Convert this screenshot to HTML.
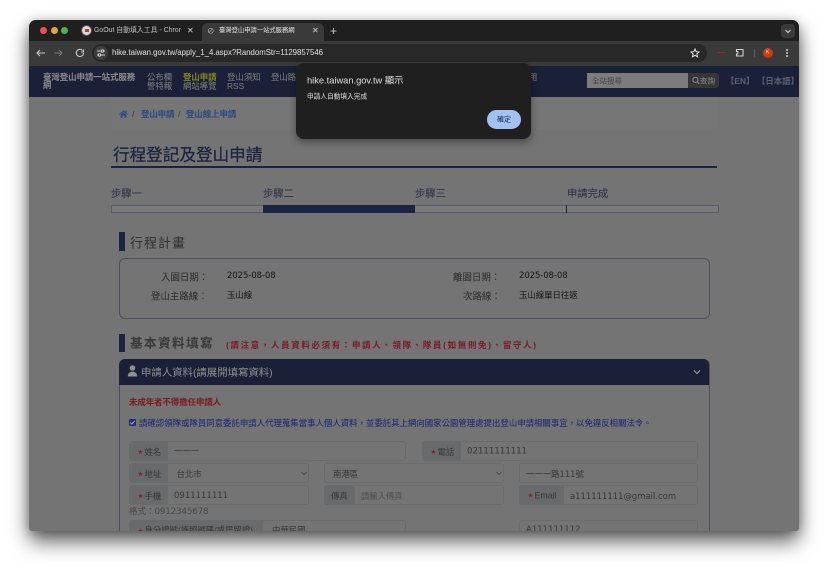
<!DOCTYPE html>
<html lang="zh-Hant">
<head>
<meta charset="utf-8">
<title>臺灣登山申請一站式服務網</title>
<style>
html,body{margin:0;padding:0;background:#fff;width:828px;height:569px;overflow:hidden}
body{font-family:"Liberation Sans","Noto Sans CJK TC",sans-serif;position:relative}
#win{position:absolute;left:29px;top:20px;width:770px;height:511px;border-radius:7px;box-shadow:0 11px 20px rgba(0,0,0,.58),0 2px 11px rgba(0,0,0,.28)}
#clip{position:absolute;left:0;top:0;width:770px;height:511px;border-radius:7px 7px 3px 3px;overflow:hidden;background:#747474}
#layer{position:absolute;left:-29px;top:-20px;width:828px;height:569px;filter:blur(.35px)}
#dlg{position:absolute;left:0;top:0;width:828px;height:569px;filter:blur(.3px)}
.t{position:absolute;white-space:nowrap;line-height:1;transform:translateY(-50%);-webkit-text-stroke:.06px currentColor}
.b{position:absolute;box-sizing:border-box}
.d{font-family:"DejaVu Sans","Noto Sans CJK TC",sans-serif}
.box{border:1px solid #696b6d;border-radius:3px;background:#747474}
.ad{background:#696a6b;border-right:1px solid #696b6d;border-radius:3px 0 0 3px}
.i{font-size:8.4px;color:#3a3a3a}
.s{color:#8c2028;display:inline-block;width:7px;font-size:6.5px;font-family:"DejaVu Sans",sans-serif;vertical-align:.2px}
.v{font-size:9px;color:#1a1a1a}
.l{font-size:9.45px;color:#303030}
</style>
</head>
<body>
<div id="win"><div id="clip"><div id="layer">

<!-- tab strip -->
<div class="b" style="left:29px;top:20px;width:770px;height:21px;background:#1f1f1f"></div>
<div class="b" style="left:40px;top:27px;width:7px;height:7px;border-radius:50%;background:#e5524c"></div>
<div class="b" style="left:50.5px;top:27px;width:7px;height:7px;border-radius:50%;background:#e0a82e"></div>
<div class="b" style="left:61px;top:27px;width:7px;height:7px;border-radius:50%;background:#4fb548"></div>
<div class="b" style="left:81px;top:25px;width:11px;height:11px;border-radius:50%;background:#d8d8d8;border:1px solid #555"></div>
<div class="b" style="left:84.5px;top:29px;width:4px;height:3px;background:#c0392b"></div>
<div class="t" style="left:94px;top:30.5px;width:87px;overflow:hidden;font-size:6.9px;line-height:12px;color:#b5b5b5">GoOut 自動填入工具 - Chrome</div>
<div class="t" style="left:187px;top:30.5px;font-size:8px;color:#d0d0d0">✕</div>
<div class="b" style="left:202px;top:23px;width:122px;height:18px;background:#3a3a3a;border-radius:6px 6px 0 0"></div>
<div class="t" style="left:207px;top:30.5px;font-size:7.5px;color:#bbb">⊘</div>
<div class="t" style="left:219px;top:30.5px;font-size:6.3px;color:#d8d8d8">臺灣登山申請一站式服務網</div>
<div class="t" style="left:312px;top:30.5px;font-size:8px;color:#d0d0d0">✕</div>
<div class="t" style="left:330px;top:30.5px;font-size:12px;color:#c8c8c8">+</div>
<div class="b" style="left:781px;top:24px;width:14px;height:14px;border-radius:4px;background:#3a3a3a"></div>
<svg class="b" style="left:784px;top:27px" width="8" height="8" viewBox="0 0 8 8"><path d="M1.5 3 L4 5.5 L6.5 3" fill="none" stroke="#ccc" stroke-width="1.2"/></svg>

<!-- toolbar -->
<div class="b" style="left:29px;top:41px;width:770px;height:25px;background:#3a3a3a"></div>
<div class="b" style="left:92px;top:44px;width:615px;height:18px;border-radius:9px;background:#282828"></div>
<div class="b" style="left:94px;top:46px;width:14px;height:14px;border-radius:50%;background:#3d3d3d"></div>
<svg class="b" style="left:35px;top:47px" width="60" height="12" viewBox="0 0 60 12" fill="none" stroke-width="1.1">
<path d="M10 6H2M5 3 2 6l3 3" stroke="#c8c8c8"/>
<path d="M19 6h8M24 3l3 3-3 3" stroke="#777"/>
<path d="M47.5 3.4A3.6 3.6 0 1 0 48.5 6M48.5 2.5v2.5H46" stroke="#c8c8c8"/>
</svg>
<svg class="b" style="left:96px;top:48px" width="10" height="10" viewBox="0 0 10 10" fill="none" stroke="#d0d0d0" stroke-width="1"><path d="M1 3h4M8 3h1M1 7h1M5 7h4"/><circle cx="6.5" cy="3" r="1.2"/><circle cx="3.5" cy="7" r="1.2"/></svg>
<div class="t" style="left:112px;top:53px;font-size:7.8px;color:#d8d8d8">hike.taiwan.gov.tw/apply_1_4.aspx?RandomStr=1129857546</div>
<svg class="b" style="left:690px;top:48px" width="10" height="10" viewBox="0 0 10 10"><path d="M5 1 6.2 3.7 9 4 6.9 5.9 7.5 8.8 5 7.3 2.5 8.8 3.1 5.9 1 4 3.8 3.7Z" fill="none" stroke="#e2e2e2" stroke-width="1"/></svg>
<div class="b" style="left:717px;top:52px;width:9px;height:1px;background:#8c2a20"></div>
<svg class="b" style="left:735px;top:47px" width="10" height="11" viewBox="0 0 10 11"><path d="M1.5 2.5h6.5v6.5h-6.5v-2h1.2v-2.5h-1.2z" fill="none" stroke="#d0d0d0" stroke-width="1.1"/></svg>
<div class="b" style="left:754px;top:49px;width:1px;height:8px;background:#5a5a5a"></div>
<div class="b" style="left:763px;top:48px;width:10px;height:10px;border-radius:50%;background:#c93a18"></div>
<div class="t" style="left:766px;top:53px;font-size:5px;color:#f0d0c8">K</div>
<div class="b" style="left:786px;top:49px;width:2px;height:2px;border-radius:50%;background:#ccc"></div>
<div class="b" style="left:786px;top:52px;width:2px;height:2px;border-radius:50%;background:#ccc"></div>
<div class="b" style="left:786px;top:55px;width:2px;height:2px;border-radius:50%;background:#ccc"></div>

<!-- site header -->
<div class="b" style="left:29px;top:66px;width:770px;height:31px;background:#192038"></div>
<div class="t" style="left:43px;top:77px;font-size:8.4px;font-weight:bold;color:#8a8a8a">臺灣登山申請一站式服務</div>
<div class="t" style="left:43px;top:85px;font-size:8.4px;font-weight:bold;color:#8a8a8a">網</div>
<div class="t" style="left:147px;top:77px;font-size:8.4px;color:#7d7d7d">公布欄</div>
<div class="t" style="left:147px;top:85.5px;font-size:8.4px;color:#7d7d7d">警特報</div>
<div class="t" style="left:183px;top:77px;font-size:8.4px;font-weight:bold;color:#85851a">登山申請</div>
<div class="t" style="left:183px;top:85.5px;font-size:8.4px;color:#7d7d7d">網站導覽</div>
<div class="t" style="left:227px;top:77px;font-size:8.4px;color:#7d7d7d">登山須知</div>
<div class="t" style="left:227px;top:85.5px;font-size:8.4px;color:#7d7d7d">RSS</div>
<div class="t" style="left:271px;top:77px;font-size:8.4px;color:#7d7d7d">登山路</div>
<div class="t" style="left:529px;top:77px;font-size:8.4px;color:#7d7d7d">用</div>
<div class="b" style="left:587px;top:73px;width:101px;height:15px;background:#7c7c7c"></div>
<div class="t" style="left:592px;top:80.5px;font-size:7.5px;color:#484848">全站搜尋</div>
<div class="b" style="left:688px;top:73px;width:31px;height:15px;background:#363636;border-radius:0 3px 3px 0"></div>
<svg class="b" style="left:692px;top:76px" width="8" height="9" viewBox="0 0 8 9" fill="none" stroke="#8a8a8a" stroke-width="1"><circle cx="3.4" cy="3.8" r="2.6"/><path d="M5.4 5.8 7.4 8"/></svg>
<div class="t" style="left:700px;top:80.5px;font-size:7.5px;color:#858585">查詢</div>
<div class="t" style="left:726px;top:80.5px;font-size:8.4px;color:#5d6270;font-weight:bold">【EN】</div>
<div class="t" style="left:757px;top:80.5px;font-size:8.4px;color:#5d6270;font-weight:bold">【日本語】</div>

<!-- breadcrumb -->
<div class="b" style="left:111px;top:97px;width:606px;height:32px;background:#767676"></div>
<svg class="b" style="left:119px;top:110px" width="9" height="8" viewBox="0 0 9 8"><path d="M4.5 .3 0 4.2l.6.6L4.5 1.6l3.9 3.2.6-.6-1.5-1.3V.8H6.3v1.1ZM1.5 4.8V7.8H3.6V5.6H5.4V7.8H7.5V4.8L4.5 2.3Z" fill="#2f4a82"/></svg>
<div class="t" style="left:132px;top:114px;font-size:8.5px;color:#3b4150">/</div>
<div class="t" style="left:141px;top:114px;font-size:8.4px;font-weight:bold;color:#2d4a82">登山申請</div>
<div class="t" style="left:178px;top:114px;font-size:8.5px;color:#3b4150">/</div>
<div class="t" style="left:186px;top:114px;font-size:8.4px;font-weight:bold;color:#2d4a82">登山線上申請</div>

<!-- title -->
<div class="t" style="left:113px;top:156px;font-size:16.6px;color:#1c2540;-webkit-text-stroke:.3px #1c2540">行程登記及登山申請</div>
<div class="b" style="left:111px;top:166px;width:606px;height:1.5px;background:#1a2340"></div>

<!-- steps -->
<div class="t" style="left:111px;top:195px;font-size:10.3px;color:#2b3048">步驟一</div>
<div class="t" style="left:263px;top:195px;font-size:10.3px;color:#2b3048">步驟二</div>
<div class="t" style="left:415px;top:195px;font-size:10.3px;color:#2b3048">步驟三</div>
<div class="t" style="left:567px;top:195px;font-size:10.3px;color:#2b3048">申請完成</div>
<div class="b" style="left:110.5px;top:204.5px;width:608px;height:8px;border:1px solid #565a70;background:#7a7a7a"></div>
<div class="b" style="left:263px;top:205px;width:152px;height:7.5px;background:#1b2442"></div>
<div class="b" style="left:566px;top:205px;width:1px;height:7.5px;background:#1b2442"></div>

<!-- section 1 -->
<div class="b" style="left:119px;top:232px;width:6px;height:19px;background:#1b2442"></div>
<div class="t" style="left:130px;top:242.5px;font-size:13px;letter-spacing:1px;color:#333">行程計畫</div>
<div class="b" style="left:118.5px;top:257.5px;width:591px;height:61px;border:1px solid #4d4f5c;border-radius:6px"></div>
<div class="t l" style="left:161px;top:277.5px">入園日期：</div>
<div class="t l" style="left:151px;top:297px">登山主路線：</div>
<div class="t v d" style="left:227px;top:275px;font-size:8.4px">2025-08-08</div>
<div class="t v" style="left:227px;top:294.5px;font-size:8.4px">玉山線</div>
<div class="t l" style="left:453px;top:277.5px">離園日期：</div>
<div class="t l" style="left:463px;top:297px">次路線：</div>
<div class="t v d" style="left:519px;top:275px;font-size:8.4px">2025-08-08</div>
<div class="t v" style="left:519px;top:294.5px;font-size:8.4px">玉山線單日往返</div>

<!-- section 2 -->
<div class="b" style="left:119px;top:334px;width:6px;height:18px;background:#1b2442"></div>
<div class="t" style="left:130px;top:344px;font-size:12.6px;letter-spacing:1.4px;font-weight:bold;color:#3a3a3a">基本資料填寫</div>
<div class="t" style="left:226px;top:345px;font-size:8.4px;letter-spacing:1.75px;font-weight:bold;color:#7a1c2c">(請注意，人員資料必須有：申請人、領隊、隊員(如無則免)、留守人)</div>

<!-- panel -->
<div class="b" style="left:118.5px;top:358.5px;width:591px;height:200px;border:1px solid #4d4f5c;border-radius:6px"></div>
<div class="b" style="left:119px;top:359px;width:590px;height:26px;background:#192038;border-radius:6px 6px 0 0"></div>
<svg class="b" style="left:127px;top:365px" width="11" height="12" viewBox="0 0 11 12" fill="#8f8f8f"><circle cx="5.5" cy="3" r="2.8"/><path d="M.8 11.5C.8 8.4 2.6 6.6 5.5 6.6s4.7 1.8 4.7 4.9Z"/></svg>
<div class="t" style="left:141px;top:373.5px;font-size:10.4px;color:#8a8a8a">申請人資料(請展開填寫資料)</div>
<svg class="b" style="left:693px;top:368px" width="8" height="8" viewBox="0 0 8 8"><path d="M1 2.5 4 5.5 7 2.5" fill="none" stroke="#8f8f8f" stroke-width="1.3"/></svg>
<div class="t" style="left:129px;top:402px;font-size:8.4px;font-weight:bold;color:#7c1c22">未成年者不得擔任申請人</div>
<div class="b" style="left:129px;top:419px;width:7px;height:7px;background:#22307a;border-radius:1px"></div>
<svg class="b" style="left:129px;top:419px" width="7" height="7" viewBox="0 0 7 7"><path d="M1.4 3.6 2.9 5 5.6 2" fill="none" stroke="#aaa" stroke-width="1"/></svg>
<div class="t" style="left:139px;top:423px;font-size:8.4px;letter-spacing:.03px;color:#1f2875">請確認領隊或隊員同意委託申請人代理蒐集當事人個人資料，並委託其上網向國家公園管理處提出登山申請相關事宜，以免違反相關法令。</div>

<!-- row 1 -->
<div class="b box" style="left:129px;top:441px;width:277px;height:20px"></div>
<div class="b ad" style="left:129px;top:441px;width:39px;height:20px"></div>
<div class="t i" style="left:137.5px;top:451.5px"><span class="s">★</span>姓名</div>
<div class="t i" style="left:174px;top:451px">一一一</div>
<div class="b box" style="left:422px;top:441px;width:276px;height:20px"></div>
<div class="b ad" style="left:422px;top:441px;width:39px;height:20px"></div>
<div class="t i" style="left:430.5px;top:451.5px"><span class="s">★</span>電話</div>
<div class="t i d" style="left:467px;top:451.5px;font-size:8.6px">02111111111</div>

<!-- row 2 -->
<div class="b box" style="left:129px;top:463px;width:180px;height:20px"></div>
<div class="b ad" style="left:129px;top:463px;width:39px;height:20px"></div>
<div class="t i" style="left:137.5px;top:473.5px"><span class="s">★</span>地址</div>
<div class="t i" style="left:176.5px;top:473.5px">台北市</div>
<svg class="b" style="left:301px;top:471px" width="6" height="5" viewBox="0 0 6 5"><path d="M.5 1 3 3.5 5.5 1" fill="none" stroke="#4c4c4c"/></svg>
<div class="b box" style="left:324px;top:463px;width:180px;height:20px"></div>
<div class="t i" style="left:333px;top:473.5px">南港區</div>
<svg class="b" style="left:496px;top:471px" width="6" height="5" viewBox="0 0 6 5"><path d="M.5 1 3 3.5 5.5 1" fill="none" stroke="#4c4c4c"/></svg>
<div class="b box" style="left:519px;top:463px;width:179px;height:20px"></div>
<div class="t i d" style="left:526px;top:473.5px;font-size:8.4px">一一一路111號</div>

<!-- row 3 -->
<div class="b box" style="left:129px;top:485px;width:180px;height:20px"></div>
<div class="b ad" style="left:129px;top:485px;width:39px;height:20px"></div>
<div class="t i" style="left:137.5px;top:495.5px"><span class="s">★</span>手機</div>
<div class="t i d" style="left:174px;top:495.5px;font-size:8.5px">0911111111</div>
<div class="b box" style="left:324px;top:485px;width:180px;height:20px"></div>
<div class="b ad" style="left:324px;top:485px;width:31px;height:20px"></div>
<div class="t i" style="left:331px;top:495.5px">傳真</div>
<div class="t i" style="left:361px;top:495.5px;font-size:8.3px;color:#505050">請輸入傳真</div>
<div class="b box" style="left:519px;top:485px;width:179px;height:20px"></div>
<div class="b ad" style="left:519px;top:485px;width:45px;height:20px"></div>
<div class="t i" style="left:527.5px;top:495.5px;font-size:8.8px"><span class="s">★</span>Email</div>
<div class="t i d" style="left:570px;top:495.5px;font-size:8.45px">a111111111@gmail.com</div>
<div class="t d" style="left:129px;top:512px;font-size:8.5px;color:#4a4a4a">格式：0912345678</div>

<!-- row 4 -->
<div class="b box" style="left:129px;top:520px;width:277px;height:20px"></div>
<div class="b ad" style="left:129px;top:520px;width:134px;height:20px"></div>
<div class="t i" style="left:137.5px;top:530px"><span class="s">★</span>身分證號(護照號碼/或居留證)</div>
<div class="t i" style="left:272px;top:530px">中華民國</div>
<div class="b box" style="left:519px;top:520px;width:179px;height:20px"></div>
<div class="t i d" style="left:526px;top:530px;font-size:8.5px">A111111112</div>

</div></div></div>

<!-- alert dialog -->
<div id="dlg">
<div class="b" style="left:296px;top:63px;width:235px;height:76px;background:#1f1f1f;border-radius:8px;box-shadow:0 3px 8px rgba(0,0,0,.4)"></div>
<div class="t" style="left:307px;top:80.5px;font-size:9.3px;color:#d4d4d4">hike.taiwan.gov.tw 顯示</div>
<div class="t" style="left:307px;top:97.5px;font-size:6.7px;color:#d0d0d0">申請人自動填入完成</div>
<div class="b" style="left:487px;top:110px;width:34px;height:19px;border-radius:10px;background:#a4c1f3"></div>
<div class="t" style="left:497px;top:119.5px;font-size:7px;color:#1f2f55">確定</div>
</div>
</body>
</html>
